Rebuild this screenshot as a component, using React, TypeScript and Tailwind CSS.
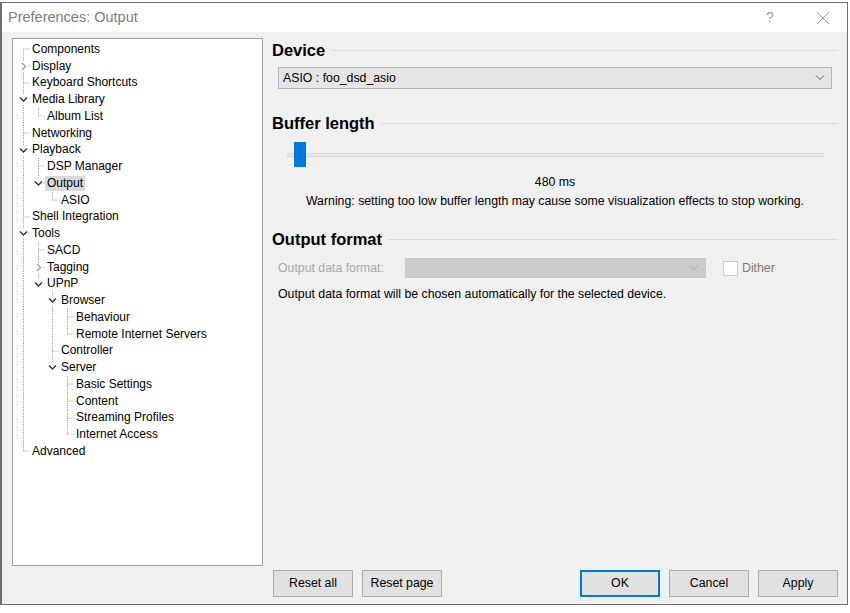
import type { ReactNode } from "react";

type TreeItem = {
  label: string;
  depth: number;
  guides: boolean[];
  kids?: "open" | "closed";
  first?: boolean;
  last?: boolean;
  selected?: boolean;
};

const ROW_H = 16.75;
const CENTERS = [7, 22, 36, 51];

const tree: TreeItem[] = [
  { label: "Components", depth: 0, guides: [], first: true },
  { label: "Display", depth: 0, guides: [], kids: "closed" },
  { label: "Keyboard Shortcuts", depth: 0, guides: [] },
  { label: "Media Library", depth: 0, guides: [], kids: "open" },
  { label: "Album List", depth: 1, guides: [true], last: true },
  { label: "Networking", depth: 0, guides: [] },
  { label: "Playback", depth: 0, guides: [], kids: "open" },
  { label: "DSP Manager", depth: 1, guides: [true] },
  { label: "Output", depth: 1, guides: [true], kids: "open", last: true, selected: true },
  { label: "ASIO", depth: 2, guides: [true, false], last: true },
  { label: "Shell Integration", depth: 0, guides: [] },
  { label: "Tools", depth: 0, guides: [], kids: "open" },
  { label: "SACD", depth: 1, guides: [true] },
  { label: "Tagging", depth: 1, guides: [true], kids: "closed" },
  { label: "UPnP", depth: 1, guides: [true], kids: "open", last: true },
  { label: "Browser", depth: 2, guides: [true, false], kids: "open" },
  { label: "Behaviour", depth: 3, guides: [true, false, true] },
  { label: "Remote Internet Servers", depth: 3, guides: [true, false, true], last: true },
  { label: "Controller", depth: 2, guides: [true, false] },
  { label: "Server", depth: 2, guides: [true, false], kids: "open", last: true },
  { label: "Basic Settings", depth: 3, guides: [true, false, false] },
  { label: "Content", depth: 3, guides: [true, false, false] },
  { label: "Streaming Profiles", depth: 3, guides: [true, false, false] },
  { label: "Internet Access", depth: 3, guides: [true, false, false], last: true },
  { label: "Advanced", depth: 0, guides: [], last: true },
];

const TreeLines = ({ item }: { item: TreeItem }) => {
  const w = CENTERS[item.depth] + 7;
  const mid = 8.5;
  const x0 = CENTERS[item.depth] + 0.5;
  const dot = { stroke: "#a0a0a0", strokeWidth: 1, strokeDasharray: "1 1" };

  return (
    <svg width={w} height={ROW_H} className="shrink-0 block">
      {item.guides.map((on, i) =>
        on ? <line key={i} x1={CENTERS[i] + 0.5} y1={0} x2={CENTERS[i] + 0.5} y2={ROW_H} {...dot} /> : null
      )}
      <line x1={x0} y1={item.first ? mid : 0} x2={x0} y2={item.last ? mid : ROW_H} {...dot} />
      <line x1={x0} y1={mid - 0.5} x2={w} y2={mid - 0.5} {...dot} />
      {item.kids && <rect x={x0 - 4.5} y={mid - 5} width={9} height={10} fill="#ffffff" />}
      {item.kids === "open" && (
        <polyline
          points={`${x0 - 3.5},${mid - 2} ${x0},${mid + 1.5} ${x0 + 3.5},${mid - 2}`}
          fill="none"
          stroke="#333333"
          strokeWidth={1.4}
        />
      )}
      {item.kids === "closed" && (
        <polyline
          points={`${x0 - 1.5},${mid - 3.5} ${x0 + 2},${mid} ${x0 - 1.5},${mid + 3.5}`}
          fill="none"
          stroke="#a0a0a0"
          strokeWidth={1.4}
        />
      )}
    </svg>
  );
};

const SectionHeading = ({ children }: { children: ReactNode }) => (
  <div className="flex h-[20px] items-center gap-[6px]">
    <span className="text-[16.5px] font-bold leading-[20px] text-black">{children}</span>
    <div className="h-px flex-1 bg-[#dadada]" />
  </div>
);

const Chevron = ({ color }: { color: string }) => (
  <svg width="10" height="6" viewBox="0 0 10 6" className="block">
    <polyline points="1,0.5 5,4.5 9,0.5" fill="none" stroke={color} strokeWidth="1" />
  </svg>
);

const Button = ({ label, primary }: { label: string; primary?: boolean }) => (
  <button
    type="button"
    className={`h-[27px] w-[80px] bg-[#e1e1e1] text-[12.3px] text-black ${
      primary ? "border-2 border-[#0078d7]" : "border border-[#adadad]"
    }`}
  >
    {label}
  </button>
);

export default function App() {
  return (
    <div className="h-[613px] w-[850px] bg-white pt-[2px] font-['Liberation_Sans',Arial,sans-serif]">
      <div className="flex h-[603px] w-[848px] flex-col border border-l-2 border-[#6f6f6f]">
        <div className="flex h-[29px] items-center bg-white pl-[6px]">
          <span className="flex-1 text-[14.5px] text-[#7d7d7d]">Preferences: Output</span>
          <span className="w-[12px] text-[14px] text-[#9a9a9a]">?</span>
          <svg width="14" height="14" viewBox="0 0 14 14" className="ml-[38px] mr-[17px] block">
            <path d="M1 1 L13 13 M13 1 L1 13" stroke="#9a9a9a" strokeWidth="1" fill="none" />
          </svg>
        </div>

        <div className="flex flex-1 bg-[#f0f0f0]">
          <div className="ml-[10px] mt-[6px] h-[528px] w-[251px] border border-[#a0a0a0] bg-white pl-[3px] pt-[2px] text-[12px] text-black">
            {tree.map((item) => (
              <div key={item.label} className="flex h-[16.75px] items-center">
                <TreeLines item={item} />
                <span
                  className={`px-[2px] leading-[15px] ${item.selected ? "bg-[#d9d9d9]" : ""}`}
                >
                  {item.label}
                </span>
              </div>
            ))}
          </div>

          <div className="ml-[9px] flex w-[566px] flex-col pb-[7px] text-[12.3px] text-black">
            <div className="mt-[8px]">
              <SectionHeading>Device</SectionHeading>
            </div>
            <div className="mx-[6px] mt-[7px] flex h-[22px] items-center justify-between border border-[#b4b4b4] bg-[#e5e5e5] pl-[4px] pr-[6px]">
              <span>ASIO : foo_dsd_asio</span>
              <Chevron color="#606060" />
            </div>

            <div className="mt-[24px]">
              <SectionHeading>Buffer length</SectionHeading>
            </div>
            <div className="ml-[15px] mr-[14px] mt-[9px] flex h-[25px] items-center">
              <div className="flex h-[4px] flex-1 items-center border border-[#dcdcdc] bg-[#e9e9e9]">
                <div className="ml-[6px] h-[25px] w-[12px] shrink-0 bg-[#0078d7]" />
              </div>
            </div>
            <div className="mt-[6px] text-center leading-[19px]">480 ms</div>
            <div className="text-center leading-[19px]">
              Warning: setting too low buffer length may cause some visualization effects to stop working.
            </div>

            <div className="mt-[18px]">
              <SectionHeading>Output format</SectionHeading>
            </div>
            <div className="ml-[6px] mt-[9px] flex h-[20px] items-center">
              <span className="w-[127px] text-[#a8a8a8]">Output data format:</span>
              <div className="flex h-[20px] w-[301px] items-center justify-end border border-[#c6c6c6] bg-[#cccccc] pr-[6px]">
                <Chevron color="#a8a8a8" />
              </div>
              <div className="ml-[17px] h-[15px] w-[15px] border border-[#cccccc] bg-white" />
              <span className="ml-[4px] text-[#7a7a7a]">Dither</span>
            </div>
            <div className="ml-[6px] mt-[8px] leading-[16px]">
              Output data format will be chosen automatically for the selected device.
            </div>

            <div className="flex-1" />
            <div className="flex items-center pl-[1px]">
              <div className="flex gap-[9px]">
                <Button label="Reset all" />
                <Button label="Reset page" />
              </div>
              <div className="flex-1" />
              <div className="flex gap-[9px]">
                <Button label="OK" primary />
                <Button label="Cancel" />
                <Button label="Apply" />
              </div>
            </div>
          </div>
        </div>
      </div>
    </div>
  );
}
